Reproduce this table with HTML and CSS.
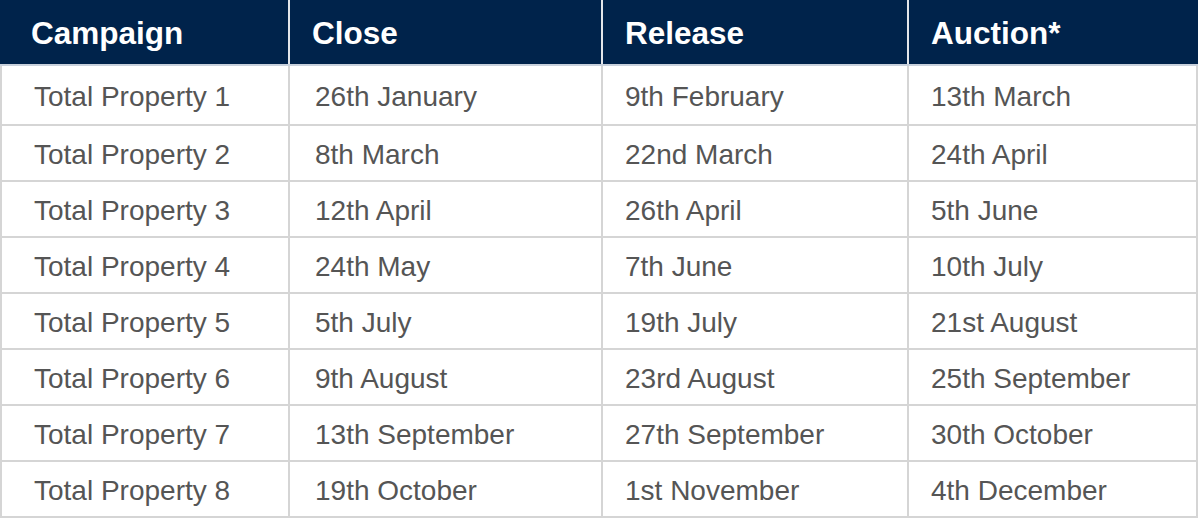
FILE: index.html
```html
<!DOCTYPE html>
<html lang="en">
<head>
<meta charset="utf-8">
<title>Campaign dates</title>
<link rel="stylesheet" href="styles.css">
</head>
<body>
<div class="schedule" role="table">
  <div class="row head" role="row">
    <div class="cell first" role="columnheader">Campaign</div>
    <div class="cell" role="columnheader">Close</div>
    <div class="cell" role="columnheader">Release</div>
    <div class="cell last" role="columnheader">Auction*</div>
  </div>
  <div class="row body top" role="row">
    <div class="cell first">Total Property 1</div>
    <div class="cell second">26th January</div>
    <div class="cell">9th February</div>
    <div class="cell last">13th March</div>
  </div>
  <div class="row body" role="row">
    <div class="cell first">Total Property 2</div>
    <div class="cell second">8th March</div>
    <div class="cell">22nd March</div>
    <div class="cell last">24th April</div>
  </div>
  <div class="row body" role="row">
    <div class="cell first">Total Property 3</div>
    <div class="cell second">12th April</div>
    <div class="cell">26th April</div>
    <div class="cell last">5th June</div>
  </div>
  <div class="row body" role="row">
    <div class="cell first">Total Property 4</div>
    <div class="cell second">24th May</div>
    <div class="cell">7th June</div>
    <div class="cell last">10th July</div>
  </div>
  <div class="row body" role="row">
    <div class="cell first">Total Property 5</div>
    <div class="cell second">5th July</div>
    <div class="cell">19th July</div>
    <div class="cell last">21st August</div>
  </div>
  <div class="row body" role="row">
    <div class="cell first">Total Property 6</div>
    <div class="cell second">9th August</div>
    <div class="cell">23rd August</div>
    <div class="cell last">25th September</div>
  </div>
  <div class="row body" role="row">
    <div class="cell first">Total Property 7</div>
    <div class="cell second">13th September</div>
    <div class="cell">27th September</div>
    <div class="cell last">30th October</div>
  </div>
  <div class="row body" role="row">
    <div class="cell first">Total Property 8</div>
    <div class="cell second">19th October</div>
    <div class="cell">1st November</div>
    <div class="cell last">4th December</div>
  </div>
</div>
</body>
</html>
```
FILE: styles.css
```css
* {
  box-sizing: border-box;
}

html, body {
  margin: 0;
  padding: 0;
  background: #ffffff;
}

body {
  font-family: "Liberation Sans", Arial, sans-serif;
}

.schedule {
  width: 1198px;
  display: flex;
  flex-direction: column;
}

.row {
  display: grid;
  grid-template-columns: 290px 313px 306px 289px;
}

.cell {
  display: flex;
  align-items: center;
  padding-left: 22px;
  white-space: nowrap;
}

/* header */
.head {
  height: 66px;
  background: #00234b;
  border-bottom: 2px solid #c9d1dc;
}

.head .cell {
  color: #ffffff;
  font-weight: bold;
  font-size: 31.5px;
  border-right: 2px solid #e3e6ea;
  padding-top: 2px;
}

.head .cell.first {
  padding-left: 31px;
}

.head .cell.last {
  border-right: none;
}

/* body */
.body {
  height: 56px;
}

.body.top {
  height: 60px;
}

.body .cell {
  color: #555555;
  font-size: 28px;
  border-right: 2px solid #d5d5d5;
  border-bottom: 2px solid #d5d5d5;
  padding-top: 3px;
}

.body .cell.first {
  border-left: 2px solid #d5d5d5;
  padding-left: 32px;
}

.body .cell.second {
  padding-left: 25px;
}
```
